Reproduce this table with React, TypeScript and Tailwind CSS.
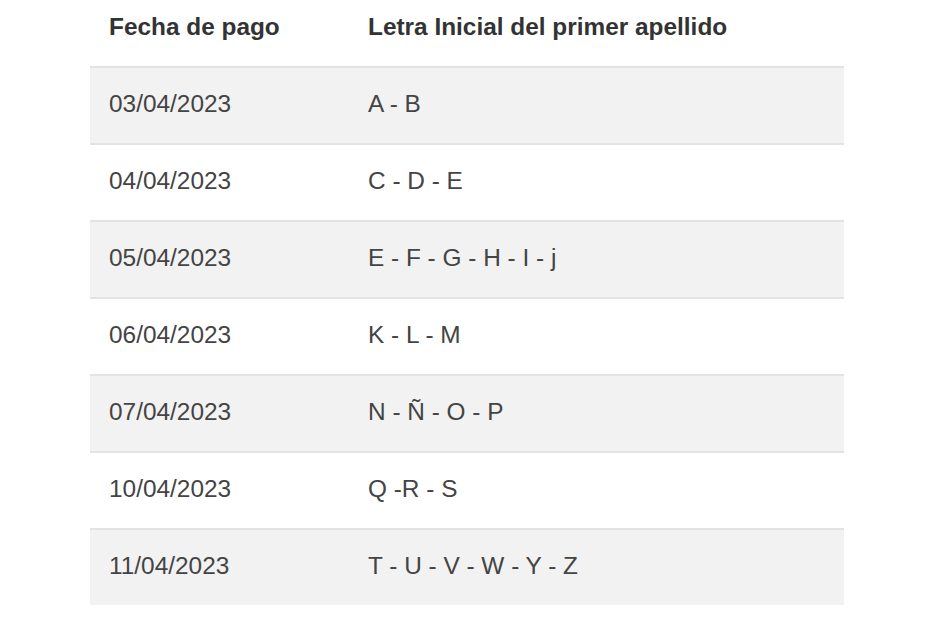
import React from 'react';

const rows = [
  { fecha: '03/04/2023', letras: 'A - B' },
  { fecha: '04/04/2023', letras: 'C - D - E' },
  { fecha: '05/04/2023', letras: 'E - F - G - H - I - j' },
  { fecha: '06/04/2023', letras: 'K - L - M' },
  { fecha: '07/04/2023', letras: 'N - Ñ - O - P' },
  { fecha: '10/04/2023', letras: 'Q -R - S' },
  { fecha: '11/04/2023', letras: 'T - U - V - W - Y - Z' },
];

export default function App() {
  return (
    <div className="w-[930px] h-[620px] bg-white font-['Liberation_Sans',Arial,sans-serif]">
      <div className="ml-[90px] w-[754px]">
        {/* Cabecera */}
        <div className="flex h-[66px] pt-[9px] text-[24.4px] font-bold text-[#333333]">
          <div className="w-[278px] pl-[19px]">Fecha de pago</div>
          <div>Letra Inicial del primer apellido</div>
        </div>
        {rows.map((row, i) => (
          <div
            key={row.fecha}
            className={`flex items-center h-[77px] pb-[3px] border-t-2 border-[#e3e3e3] text-[24.4px] text-[#444444] ${
              i % 2 === 0 ? 'bg-[#f2f2f2]' : 'bg-white'
            }`}
          >
            <div className="w-[278px] pl-[19px]">{row.fecha}</div>
            <div>{row.letras}</div>
          </div>
        ))}
      </div>
    </div>
  );
}
